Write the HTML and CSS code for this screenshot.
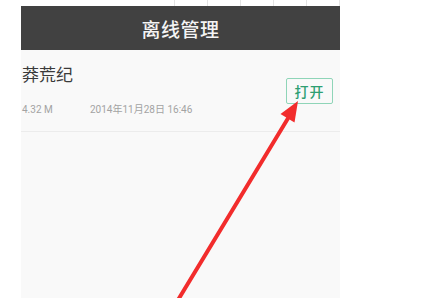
FILE: index.html
```html
<!DOCTYPE html>
<html lang="zh">
<head>
<meta charset="utf-8">
<link rel="stylesheet" href="styles.css">
</head>
<body>
<div class="page">
  <div class="topstrip">
    <div class="cells"><span></span><span></span><span></span><span></span><span></span></div>
  </div>
  <div class="main">
    <div class="gutter"></div>
    <div class="phone">
      <div class="header">离线管理</div>
      <div class="item">
        <div class="info">
          <div class="name">莽荒纪</div>
          <div class="meta"><span class="size">4.32 M</span><span class="date">2014年11月28日 16:46</span></div>
        </div>
        <div class="btn">打开</div>
      </div>
    </div>
    <div class="rest"></div>
  </div>
  <svg class="arrow" width="431" height="298" viewBox="0 0 431 298">
    <line x1="178" y1="300" x2="290" y2="115" stroke="#f22c2c" stroke-width="4" stroke-linecap="round"/>
    <polygon points="298,101 280.5,114 294.5,122.5" fill="#f22c2c"/>
  </svg>
</div>
</body>
</html>
```
FILE: styles.css
```css
html, body {
  margin: 0;
  padding: 0;
  background: #ffffff;
}
.page {
  position: relative;
  width: 431px;
  height: 298px;
  overflow: hidden;
  font-family: "Noto Sans CJK SC", "Noto Sans", sans-serif;
}
.topstrip {
  height: 6px;
  display: flex;
  padding-left: 174px;
}
.cells {
  display: flex;
  height: 6px;
  border-left: 1px solid #e4e4e4;
}
.cells span {
  width: 32px;
  height: 6px;
  border-right: 1px solid #e4e4e4;
}
.main {
  display: flex;
  height: 292px;
}
.gutter {
  width: 21px;
  flex: none;
}
.phone {
  width: 319px;
  flex: none;
  background: #f9f9f9;
  display: flex;
  flex-direction: column;
}
.rest {
  flex: 1;
}
.header {
  height: 44px;
  background: #414141;
  color: #f4f4f4;
  font-size: 19px;
  font-weight: 500;
  display: flex;
  align-items: center;
  justify-content: center;
  letter-spacing: 0.5px;
}
.item {
  height: 81px;
  border-bottom: 1px solid #ececec;
  display: flex;
  align-items: flex-start;
  justify-content: space-between;
  padding-right: 7px;
}
.info {
  padding-left: 1px;
  padding-top: 13px;
}
.name {
  font-size: 17px;
  line-height: 22px;
  color: #3a3a3a;
}
.meta {
  margin-top: 19px;
  font-family: "Roboto", "Noto Sans CJK SC", sans-serif;
  font-size: 10px;
  line-height: 12px;
  color: #a3a3a3;
  display: flex;
}
.size {
  width: 68px;
}
.btn {
  margin-top: 28px;
  width: 45px;
  height: 24px;
  border: 1px solid #8fd5b8;
  border-radius: 2px;
  color: #2e9f72;
  font-size: 14px;
  font-weight: 500;
  display: flex;
  align-items: center;
  justify-content: center;
  letter-spacing: 1px;
}
.arrow {
  position: absolute;
  left: 0;
  top: 0;
}
```
